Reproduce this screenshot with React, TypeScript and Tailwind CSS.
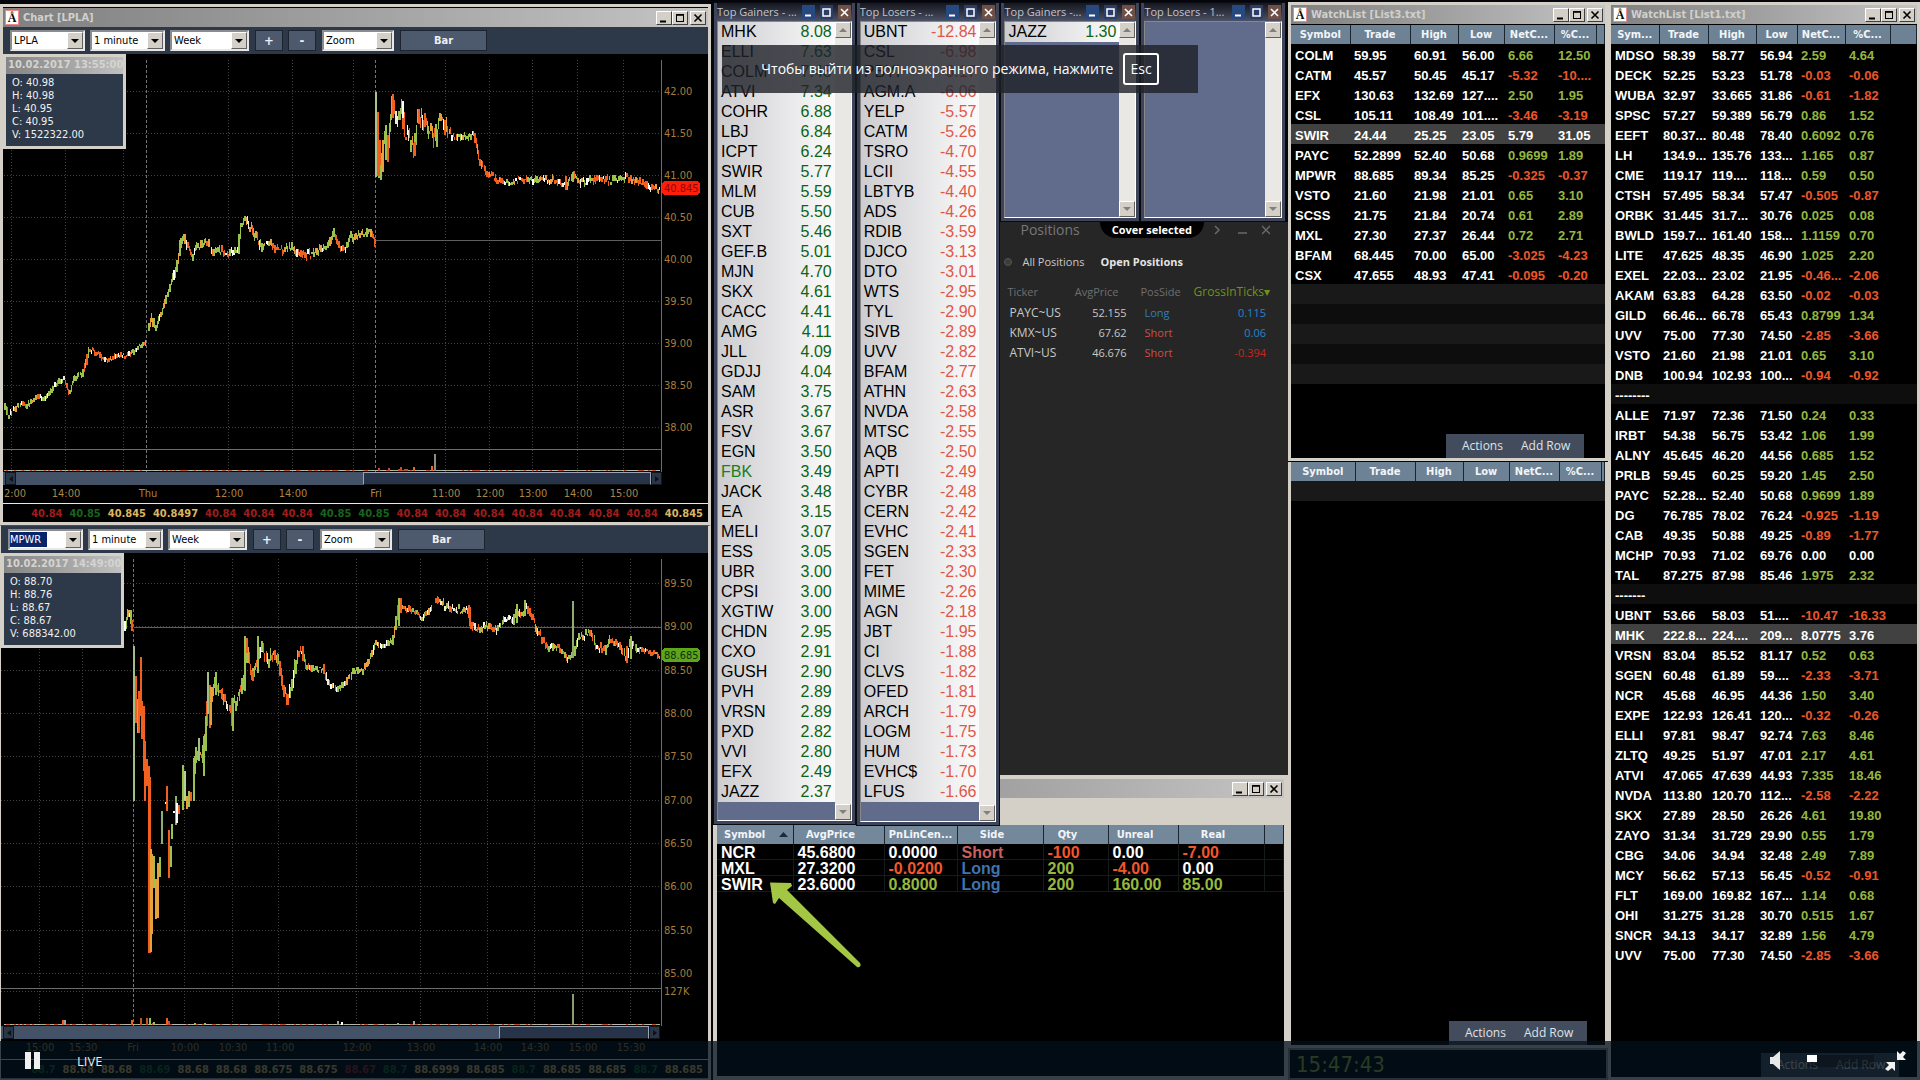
import React from "react";

const UI = "font-['DejaVu_Sans_Condensed','Noto_Sans',sans-serif]";
const SEGOE = "font-['Open_Sans','Noto_Sans',sans-serif]";

/* ---------- classic window chrome ---------- */

function ClassicButton({ label, children }: { label: string; children: React.ReactNode }) {
  return (
    <button
      aria-label={label}
      className="flex h-[14px] w-4 items-center justify-center border border-t-white border-r-[#404040] border-b-[#404040] border-l-white bg-[#d4d0c8]"
    >
      <svg width="12" height="10" viewBox="0 0 12 10" fill="none" stroke="#000" strokeWidth="1.6">
        {children}
      </svg>
    </button>
  );
}

function ClassicControls() {
  return (
    <div className="flex">
      <ClassicButton label="Minimize">
        <path d="M2 8.5h6" strokeWidth="2" />
      </ClassicButton>
      <ClassicButton label="Maximize">
        <path d="M2 1.5h8M2.5 1v8M9.5 1v8M2 8.5h8" strokeWidth="1" />
        <path d="M2 2h8" />
      </ClassicButton>
      <span className="w-0.5" />
      <ClassicButton label="Close">
        <path d="M2.5 1.5l7 7M9.5 1.5l-7 7" />
      </ClassicButton>
    </div>
  );
}

function TitleBar({ title }: { title: string }) {
  return (
    <div className="flex h-[19px] shrink-0 items-center bg-gradient-to-r from-[#808080] to-[#c4c4c4] px-0.5">
      {title && (
        <>
          <span className="flex h-[15px] w-[14px] items-center justify-center border border-[#e88] bg-white font-['Liberation_Serif',serif] text-xs leading-none font-bold text-black">
            Å
          </span>
          <h2 className={`${UI} ml-1 text-[11px] leading-4 font-bold text-[#d0d0cd]`}>{title}</h2>
        </>
      )}
      <span className="flex-1" />
      <ClassicControls />
    </div>
  );
}

/* ---------- charts ---------- */

type Pt = [number, number];
type Bar = [number, number, number, string];

const UP = "#9cc24e";
const DOWN = "#f2601f";
const MIX = "#e8a03a";

function trace(points: Pt[], vol: (x: number) => number, seed: number) {
  let s = seed;
  const rnd = () => {
    s = (s * 1103515245 + 12345) % 2147483648;
    return s / 2147483648;
  };
  const out: Bar[] = [];
  for (let i = 0; i < points.length - 1; i++) {
    const [x0, y0] = points[i];
    const [x1, y1] = points[i + 1];
    const n = Math.max(1, Math.round((x1 - x0) / 1.3));
    for (let k = 0; k < n; k++) {
      const ya = y0 + ((y1 - y0) * k) / n;
      const yb = y0 + ((y1 - y0) * (k + 1)) / n;
      const v = vol(x0);
      const j = (rnd() - 0.5) * v * 0.7;
      const top = Math.min(ya, yb) - rnd() * v * 0.5 + j;
      const bottom = Math.max(ya, yb) + rnd() * v * 0.5 + j + 1;
      const r = rnd();
      let c = y1 < y0 ? (r < 0.65 ? UP : r < 0.8 ? MIX : r < 0.9 ? "#fff" : DOWN) : r < 0.62 ? DOWN : r < 0.75 ? MIX : r < 0.88 ? "#f4ead8" : UP;
      if (Math.abs(y1 - y0) < 5 && r > 0.8) c = "#fff";
      out.push([x0 + ((x1 - x0) * k) / n, top, bottom, c]);
    }
  }
  return out;
}

const lplaA: Pt[] = [[5,403],[9,415],[16,408],[23,402],[27,406],[38,395],[43,399],[49,395],[55,386],[64,378],[70,391],[76,377],[83,374],[87,360],[90,348],[96,352],[109,360],[117,355],[129,355],[138,348],[147,340]];
const lplaB: Pt[] = [[149,327],[153,317],[156,328],[161,317],[166,300],[170,290],[174,278],[177,267],[180,253],[181,242],[185,236],[188,248],[193,254],[198,246],[207,240],[214,252],[222,250],[230,253],[239,249],[242,223],[245,218],[250,225],[256,235],[262,245],[269,241],[275,248],[285,250],[292,246],[301,254],[312,254],[321,248],[330,244],[334,232],[339,245],[347,249],[351,238],[360,234],[371,232],[377,243]];
const lplaC: Pt[] = [[379,170],[382,166],[386,135],[388,152],[393,100],[396,115],[399,117],[403,105],[406,133],[411,135],[415,150],[419,112],[425,123],[431,128],[436,140],[440,121],[445,121],[452,136],[459,137],[475,135],[480,158],[487,173],[493,175],[498,180],[507,183],[516,180],[528,180],[542,178],[555,180],[567,184],[574,176],[582,182],[592,179],[611,180],[627,176],[636,182],[647,185],[661,189]];
const lplaBars: Bar[] = [
  [376, 92, 177, "#a9c48a"],[378, 112, 176, DOWN],[380, 140, 176, DOWN],[381, 165, 180, UP],[383, 140, 172, MIX],[386, 125, 160, UP],[388, 135, 162, DOWN],[393, 94, 118, DOWN],[403, 101, 118, "#fff"],[415, 142, 156, DOWN],[437, 130, 147, UP],[566, 176, 190, DOWN],[573, 172, 182, UP],
];

const mpwrA: Pt[] = [[125,630],[129,612],[131,613],[133,628]];
const mpwrB: Pt[] = [[194,775],[196,752],[203,753],[206,735],[208,700],[212,700],[216,680],[220,690],[225,695],[232,710],[236,700],[242,690],[245,675],[248,650],[253,673],[258,655],[262,648],[269,657],[275,651],[280,663],[284,687],[288,699],[292,687],[296,667],[299,650],[303,650],[307,663],[312,668],[324,667],[328,680],[331,685],[338,688],[347,680],[354,670],[363,668],[372,655],[376,642],[383,644],[393,640],[396,628],[399,607],[404,605],[413,610],[422,616],[433,607]];
const mpwrC: Pt[] = [[436,598],[445,603],[459,609],[469,608],[471,623],[480,629],[489,624],[498,629],[505,618],[514,619],[517,608],[522,615],[528,606],[533,617],[539,630],[549,648],[558,645],[569,656],[575,653],[579,638],[590,630],[597,645],[606,648],[611,639],[620,643],[627,657],[631,640],[638,647],[647,648],[661,655]];
const mpwrBars: Bar[] = [
  [134, 645, 800, "#9fbf86"],[136, 675, 722, DOWN],[138, 698, 732, MIX],[139, 690, 732, DOWN],[141, 656, 715, DOWN],[142, 700, 738, DOWN],[144, 705, 770, DOWN],[145, 740, 800, DOWN],[147, 758, 785, DOWN],[149, 765, 952, DOWN],[150, 776, 952, DOWN],[151, 848, 951, MIX],[152, 853, 933, MIX],[154, 855, 887, UP],[156, 878, 918, MIX],[158, 862, 917, MIX],[160, 856, 876, UP],
  [162, 810, 843, "#8cae74"],[166, 801, 803, "#fff"],[167, 785, 810, DOWN],[169, 829, 877, DOWN],[171, 845, 866, UP],[172, 823, 838, UP],[174, 810, 812, "#fff"],[176, 795, 824, "#8cae74"],[177, 802, 822, "#fff"],[179, 804, 813, DOWN],[183, 764, 809, UP],[185, 770, 800, "#b7cf95"],[187, 795, 808, MIX],[189, 790, 806, UP],[191, 791, 800, DOWN],[194, 757, 800, UP],[196, 746, 762, UP],[199, 737, 760, "#9fbf86"],[204, 735, 775, UP],[206, 715, 750, UP],
  [208, 671, 713, "#9fbf86"],[210, 684, 727, DOWN],[211, 686, 724, MIX],[216, 671, 694, UP],[232, 697, 725, DOWN],[233, 697, 730, UP],[245, 635, 690, UP],[247, 637, 652, DOWN],[258, 635, 672, UP],[253, 670, 680, DOWN],[262, 640, 650, UP],[288, 695, 704, DOWN],[303, 645, 660, DOWN],[399, 597, 625, UP],[401, 597, 612, DOWN],[470, 606, 625, DOWN],[517, 603, 622, UP],[525, 599, 615, UP],[573, 600, 657, "#8cae74"],[627, 645, 662, DOWN],[631, 635, 658, UP],
];

interface ChartSpec {
  id: string;
  left: number;
  top: number;
  height: number;
  prices: [string, number][];
  times: [string, number][];
  dashed: number[];
  verticals: number[];
  close: number;
  closeFrom: number;
  split: number;
  bars: Bar[];
  volume: Bar[];
  tag: [string, number, string, string];
}

function noiseVolume(base: number, hotspots: [number, number, number][], seed: number) {
  let s = seed;
  const rnd = () => {
    s = (s * 1103515245 + 12345) % 2147483648;
    return s / 2147483648;
  };
  const out: Bar[] = [];
  for (let x = 5; x < 661; x += 2) {
    const spot = hotspots.find(([a, b]) => x >= a && x <= b);
    const r = rnd();
    const h = 1 + (spot && r < 0.35 ? rnd() * spot[2] : 0);
    out.push([x, base - h, base, r < 0.35 ? "#c4502a" : r < 0.6 ? "#a9b088" : "#b8b8b8"]);
  }
  return out;
}

const lpla: ChartSpec = {
  id: "LPLA",
  left: 3,
  top: 54,
  height: 418,
  prices: [["42.00", 92],["41.50", 134],["41.00", 176],["40.50", 218],["40.00", 260],["39.50", 302],["39.00", 344],["38.50", 386],["38.00", 428]],
  times: [["2:00", 15],["14:00", 66],["Thu", 148],["12:00", 229],["14:00", 293],["Fri", 376],["11:00", 446],["12:00", 490],["13:00", 533],["14:00", 578],["15:00", 624]],
  dashed: [147, 376],
  verticals: [12, 66, 124, 229, 293, 354, 446, 490, 533, 578, 624],
  close: 240,
  closeFrom: 376,
  split: 449,
  bars: [
    ...trace(lplaA, () => 5, 7),
    ...trace(lplaB, (x) => (x < 181 ? 6 : 8), 11),
    ...trace(lplaC, (x) => (x < 450 ? 15 : 7), 5),
    ...lplaBars,
  ],
  volume: [...noiseVolume(471, [[376, 420, 3]], 3), [435, 454, 471, "#8c8c84"], [432, 466, 471, DOWN], [414, 467, 471, DOWN]],
  tag: ["40.845", 188, "#ff1d0a", "#8c0a00"],
};

const mpwr: ChartSpec = {
  id: "MPWR",
  left: 1,
  top: 552,
  height: 473,
  prices: [["89.50", 583],["89.00", 626],["88.50", 670],["88.00", 713],["87.50", 756],["87.00", 800],["86.50", 843],["86.00", 886],["85.50", 930],["85.00", 973],["127K", 991]],
  times: [["15:00", 40],["15:30", 83],["Fri", 133],["10:00", 185],["10:30", 233],["11:00", 280],["12:00", 357],["13:00", 421],["14:00", 488],["14:30", 535],["15:00", 583],["15:30", 631]],
  dashed: [134],
  verticals: [40, 83, 185, 233, 279, 357, 421, 488, 535, 583, 631],
  close: 626,
  closeFrom: 134,
  split: 987,
  bars: [...trace(mpwrA, () => 6, 2), ...trace(mpwrB, (x) => (x < 300 ? 12 : 6), 19), ...trace(mpwrC, () => 7, 23), ...mpwrBars],
  volume: [...noiseVolume(1024, [[125, 170, 7]], 9), [573, 993, 1024, "#8d9c70"], [63, 1019, 1024, DOWN], [65, 1019, 1024, "#9a9"], [132, 1019, 1024, DOWN], [150, 1017, 1024, UP], [154, 1021, 1024, UP], [167, 1017, 1024, DOWN], [195, 1022, 1024, UP], [205, 1022, 1024, UP], [338, 1020, 1024, "#9a9"], [342, 1021, 1024, "#fff"], [398, 1022, 1024, "#9a9"], [414, 1020, 1024, "#9a9"]],
  tag: ["88.685", 654, "#5ea51c", "#12300a"],
};

const AXIS_FONT = "'DejaVu Sans Condensed','Noto Sans',sans-serif";

function PricePlot({ c }: { c: ChartSpec }) {
  return (
    <svg
      role="img"
      aria-label={`${c.id} price chart`}
      width="709"
      height={c.height}
      viewBox={`${c.left} ${c.top} 709 ${c.height}`}
      className="block shrink-0 bg-black"
      shapeRendering="crispEdges"
    >
      <g stroke="#424242" strokeDasharray="1 2">
        {c.prices.map(([p, y]) => (
          <path key={p} d={`M1 ${y - 0.5}H662`} />
        ))}
        {c.verticals.map((x) => (
          <path key={x} d={`M${x - 0.5} ${c.top + 6}V${c.top + c.height}`} />
        ))}
      </g>
      {c.dashed.map((x) => (
        <path key={x} d={`M${x - 0.5} ${c.top + 6}V${c.top + c.height}`} stroke="#757575" strokeDasharray="3 2" />
      ))}
      <path d={`M${c.closeFrom} ${c.close + 0.5}H662`} stroke="#5e5e5e" />
      <path d={`M1 ${c.split + 0.5}H662`} stroke="#6c6c6c" />
      <path d={`M661.5 ${c.top + 6}V${c.top + c.height}`} stroke="#6c6c6c" />
      {[...c.bars, ...c.volume].map(([x, a, b, col], i) => (
        <path key={i} d={`M${x} ${a}V${b}`} stroke={col} strokeWidth="1.3" />
      ))}
      <g fill="#a87c38" fontSize="11" fontFamily={AXIS_FONT}>
        {c.prices.map(([p, y]) => (
          <text key={p} x="664" y={y + 3}>
            {p}
          </text>
        ))}
      </g>
      <rect x="662" y={c.tag[1] - 7} width="38" height="14" rx="4" fill={c.tag[2]} />
      <text x="664" y={c.tag[1] + 4} fontSize="11" fill={c.tag[3]} fontFamily={AXIS_FONT}>
        {c.tag[0]}
      </text>
    </svg>
  );
}

function Combo({ label, value, width, active }: { label: string; value: string; width: string; active?: boolean }) {
  return (
    <label className={`relative flex h-[21px] items-center border-2 border-[#8c8c8c] border-r-[#e8e8e8] border-b-[#e8e8e8] bg-white ${width}`}>
      {active ? (
        <input
          aria-label={label}
          defaultValue={value}
          className={`${UI} h-[15px] w-[37px] bg-[#0a246a] text-[11px] leading-4 text-white outline-none`}
        />
      ) : (
        <select aria-label={label} className={`${UI} h-full w-full appearance-none bg-white pl-0.5 text-[11px] leading-4 text-black outline-none`}>
          <option>{value}</option>
        </select>
      )}
      <span className="pointer-events-none absolute top-0 right-0 flex h-full w-4 items-center justify-center border border-t-white border-r-[#606060] border-b-[#606060] border-l-white bg-[#d4d0c8]">
        <svg width="8" height="4" viewBox="0 0 8 4">
          <path d="M0 0h8L4 4z" />
        </svg>
      </span>
    </label>
  );
}

const flat = "h-[21px] border border-[#1c2430] bg-[#4d596c] text-center leading-4 font-bold text-[#eceff3]";

function ChartToolbar({ symbol, active }: { symbol: string; active?: boolean }) {
  return (
    <div className="flex h-[27px] shrink-0 items-center bg-[#2d3848] pl-[7px]">
      <Combo label="Symbol" value={symbol} width="w-[75px]" active={active} />
      <span className="w-[5px]" />
      <Combo label="Interval" value="1 minute" width="w-[75px]" />
      <span className="w-[5px]" />
      <Combo label="Range" value="Week" width="w-[79px]" />
      <button className={`${UI} ${flat} ml-1.5 w-7 text-[13px]`}>+</button>
      <button className={`${UI} ${flat} ml-[5px] w-7 text-[13px]`}>-</button>
      <span className="w-1.5" />
      <Combo label="Zoom" value="Zoom" width="w-[72px]" />
      <button className={`${UI} ${flat} ml-1.5 w-[87px] text-[11px]`}>Bar</button>
    </div>
  );
}

function TimeScroll({ thumb }: { thumb: string }) {
  const arrow = "flex w-[11px] items-center justify-center border border-[#0e1520] bg-[#2a3646]";
  return (
    <div className="flex h-[13px] w-[659px] shrink-0 bg-[#445268] pl-0.5">
      <button aria-label="Scroll left" className={arrow}>
        <svg width="4" height="6"><path d="M4 0v6L0 3z" fill="#0c121a" /></svg>
      </button>
      <span className="flex-1" />
      <span className={`border border-[#9aa4b2] border-b-[#111] bg-[#263349] ${thumb}`} />
      <button aria-label="Scroll right" className={arrow}>
        <svg width="4" height="6"><path d="M0 0v6l4-3z" fill="#0c121a" /></svg>
      </button>
    </div>
  );
}

function TimeAxis({ c }: { c: ChartSpec }) {
  return (
    <svg width="709" height="18" viewBox={`${c.left} 0 709 18`} className="block shrink-0 bg-black">
      <g fill="#a98546" fontSize="11" textAnchor="middle" fontFamily={AXIS_FONT}>
        {c.times.map(([t, x]) => (
          <text key={x} x={x} y="12">
            {t}
          </text>
        ))}
      </g>
    </svg>
  );
}

function Tape({ items }: { items: [string, string][] }) {
  const tone: Record<string, string> = { r: "text-[#a01c1c]", g: "text-[#17641f]", y: "text-[#dcb560]" };
  return (
    <div className={`${UI} flex h-[19px] shrink-0 items-center justify-end gap-[7px] overflow-hidden border-t border-[#e8e8e8] bg-black pt-0.5 pr-[5px] text-[11px] leading-4 font-bold`}>
      {items.map(([v, t], i) => (
        <span key={i} className={tone[t]}>
          {v}
        </span>
      ))}
    </div>
  );
}

function QuoteTip({ time, rows }: { time: string; rows: string[] }) {
  return (
    <div className={`${UI} absolute top-0 left-0 h-[95px] w-[123px] border-[3px] border-[#d4d0c8] bg-[#2d3848] text-[11px] text-[#f0f0f0]`}>
      <div className="h-[17px] overflow-hidden bg-gradient-to-r from-[#858585] to-[#c0c0c0] pl-0.5 leading-4 font-bold whitespace-nowrap text-[#d4d4d0]">
        {time}
      </div>
      <div className="pt-0.5 pl-1.5 leading-[13px]">
        {rows.map((r) => (
          <div key={r}>{r}</div>
        ))}
      </div>
    </div>
  );
}

const tape1: [string, string][] = [["40.84","r"],["40.85","g"],["40.845","y"],["40.8497","y"],["40.84","r"],["40.84","r"],["40.84","r"],["40.85","g"],["40.85","g"],["40.84","r"],["40.84","r"],["40.84","r"],["40.84","r"],["40.84","r"],["40.84","r"],["40.84","r"],["40.845","y"]];
const tape2: [string, string][] = [["88.7","g"],["88.68","y"],["88.68","y"],["88.69","g"],["88.68","y"],["88.68","y"],["88.675","y"],["88.675","y"],["88.67","r"],["88.7","g"],["88.6999","y"],["88.685","y"],["88.7","g"],["88.685","y"],["88.685","y"],["88.7","g"],["88.685","y"]];

/* ---------- gainers / losers ---------- */

const gainers = "MHK 8.08,ELLI 7.63,COLM 7.48,ATVI 7.34,COHR 6.88,LBJ 6.84,ICPT 6.24,SWIR 5.77,MLM 5.59,CUB 5.50,SXT 5.46,GEF.B 5.01,MJN 4.70,SKX 4.61,CACC 4.41,AMG 4.11,JLL 4.09,GDJJ 4.04,SAM 3.75,ASR 3.67,FSV 3.67,EGN 3.50,FBK 3.49,JACK 3.48,EA 3.15,MELI 3.07,ESS 3.05,UBR 3.00,CPSI 3.00,XGTIW 3.00,CHDN 2.95,CXO 2.91,GUSH 2.90,PVH 2.89,VRSN 2.89,PXD 2.82,VVI 2.80,EFX 2.49,JAZZ 2.37";
const losers = "UBNT -12.84,CSL -6.98,PBYI -6.17,AGM.A -6.06,YELP -5.57,CATM -5.26,TSRO -4.70,LCII -4.55,LBTYB -4.40,ADS -4.26,RDIB -3.59,DJCO -3.13,DTO -3.01,WTS -2.95,TYL -2.90,SIVB -2.89,UVV -2.82,BFAM -2.77,ATHN -2.63,NVDA -2.58,MTSC -2.55,AQB -2.50,APTI -2.49,CYBR -2.48,CERN -2.42,EVHC -2.41,SGEN -2.33,FET -2.30,MIME -2.26,AGN -2.18,JBT -1.95,CI -1.88,CLVS -1.82,OFED -1.81,ARCH -1.79,LOGM -1.75,HUM -1.73,EVHC$ -1.70,LFUS -1.66";

function ScrollButton({ down }: { down?: boolean }) {
  return (
    <button
      aria-label={down ? "Scroll down" : "Scroll up"}
      className="flex h-4 w-4 items-center justify-center border border-t-white border-r-[#606060] border-b-[#606060] border-l-white bg-[#d4d0c8]"
    >
      <svg width="8" height="4" viewBox="0 0 8 4">
        <path d={down ? "M0 0h8L4 4z" : "M0 4h8L4 0z"} fill="#808080" />
      </svg>
    </button>
  );
}

function MoverWindow({ title, data, height }: { title: string; data: string; height: string }) {
  const rows = data ? data.split(",").map((r) => r.split(" ")) : [];
  const mini = "flex h-[14px] w-[13px] items-center justify-center";
  return (
    <section className={`relative z-10 flex flex-col border border-[#0a0a12] bg-[#3e4558] px-[3px] pb-[3px] ${height}`}>
      <header className="flex h-[18px] shrink-0 items-center gap-[5px] bg-gradient-to-b from-[#15171f] to-[#4c5266] pr-px">
        <h2 className="flex-1 overflow-hidden font-['Open_Sans','Noto_Sans',sans-serif] text-[11px] leading-4 whitespace-nowrap text-[#c2c4c9]">{title}</h2>
        <button aria-label="Minimize" className={`${mini} bg-[#28497f]`}>
          <svg width="9" height="9"><path d="M1 7.5h6" stroke="#fff" strokeWidth="2" /></svg>
        </button>
        <button aria-label="Maximize" className={`${mini} bg-[#2c3e66]`}>
          <svg width="9" height="9"><rect x="1" y="1" width="7" height="7" fill="none" stroke="#fff" strokeWidth="1.5" /></svg>
        </button>
        <button aria-label="Close" className={`${mini} bg-[#6f5048]`}>
          <svg width="9" height="9"><path d="M1 1l7 7M8 1L1 8" stroke="#fff" strokeWidth="1.6" /></svg>
        </button>
      </header>
      <div className="flex min-h-0 flex-1 border border-t-[#888] border-r-white border-b-white border-l-[#888] bg-[#616b8b]">
        <div className="min-w-0 flex-1">
          <table className="w-full border-collapse bg-gradient-to-r from-[#cdcdd0] via-[#e4e4e6] to-[#fbfbfb] font-['Liberation_Sans',Arial,sans-serif] text-base leading-5">
            <tbody>
              {rows.map(([s, v], i) => (
                <tr key={i} className="h-5">
                  <td className={`p-0 pl-[3px] ${s === "FBK" ? "text-[#15801f]" : "text-black"}`}>{s}</td>
                  <td className={`p-0 pr-[3px] text-right ${v[0] === "-" ? "text-[#e0574a]" : "text-[#0c6416]"}`}>{v}</td>
                </tr>
              ))}
            </tbody>
          </table>
        </div>
        <div className="flex w-4 flex-col justify-between bg-[#e9e8e5]">
          <ScrollButton />
          <ScrollButton down />
        </div>
      </div>
    </section>
  );
}

/* ---------- positions ---------- */

function Positions() {
  const rows = [["PAYC~US", "52.155", "Long", "0.115"], ["KMX~US", "67.62", "Short", "0.06"], ["ATVI~US", "46.676", "Short", "-0.394"]];
  return (
    <section className={`${SEGOE} flex min-h-0 flex-1 flex-col bg-[#262626] pr-[18px] pl-[7px] text-[#c8c8c8]`}>
      <header className="flex h-4 items-center text-[#777]">
        <h2 className="ml-[13px] text-sm leading-4">Positions</h2>
        <button className="ml-5 h-4 rounded-b-full bg-black px-3 text-[11px] leading-4 font-bold text-white">Cover selected</button>
        <span className="flex-1" />
        <button aria-label="Expand" className="w-6"><svg width="8" height="10" fill="none" stroke="#6a6a6a" strokeWidth="1.5"><path d="M1 1l4 4-4 4" /></svg></button>
        <button aria-label="Minimize" className="w-6"><svg width="9" height="10"><path d="M0 8h9" stroke="#6a6a6a" strokeWidth="1.5" /></svg></button>
        <button aria-label="Close" className="w-2"><svg width="8" height="10"><path d="M0 1l8 8M8 1L0 9" stroke="#6a6a6a" strokeWidth="1.5" /></svg></button>
      </header>
      <nav className="mt-[14px] flex h-5 items-center gap-4 text-[11px] leading-5">
        <span className="-mr-[6px] -ml-[3px] h-2 w-2 shrink-0 rounded-full border border-[#555] bg-[#3c3c3c]" />
        <button>All Positions</button>
        <button className="font-bold text-[#e4e4e4]">Open Positions</button>
      </nav>
      <table className="mt-2 table-fixed border-collapse text-[11px] leading-5">
        <colgroup>
          <col className="w-[60px]" />
          <col className="w-[59px]" />
          <col className="w-[62px]" />
          <col />
        </colgroup>
        <thead className="text-[#6e6e6e]">
          <tr className="h-[23px]">
            <th className="p-0 text-left font-normal">Ticker</th>
            <th className="p-0 pr-2 text-right font-normal">AvgPrice</th>
            <th className="p-0 pl-[14px] text-left font-normal">PosSide</th>
            <th className="p-0 text-right text-xs leading-5 font-normal whitespace-nowrap text-[#71911c]">GrossInTicks▾</th>
          </tr>
        </thead>
        <tbody>
          {rows.map(([t, p, s, g]) => (
            <tr key={t} className="h-5">
              <td className="p-0 pl-0.5 text-xs leading-5 whitespace-nowrap">{t}</td>
              <td className="p-0 text-right">{p}</td>
              <td className={`p-0 pl-[18px] ${s === "Long" ? "text-[#2f7fb8]" : "text-[#c8504a]"}`}>{s}</td>
              <td className={`p-0 pr-1 text-right ${g[0] === "-" ? "text-[#c4261f]" : "text-[#1f86cf]"}`}>{g}</td>
            </tr>
          ))}
        </tbody>
      </table>
    </section>
  );
}

/* ---------- account grid ---------- */

const head = "h-[19px] overflow-hidden border-r border-[#1b2530] p-0 text-center text-[11px] leading-4 font-bold whitespace-nowrap text-[#f2f5f8]";

function AccountGrid() {
  const rows = [
    ["NCR", "45.6800", "0.0000", "Short", "-100", "0.00", "-7.00"],
    ["MXL", "27.3200", "-0.0200", "Long", "200", "-4.00", "0.00"],
    ["SWIR", "23.6000", "0.8000", "Long", "200", "160.00", "85.00"],
  ];
  const tone = (v: string, i: number) => {
    if (i < 2) return "text-white";
    if (v === "Short") return "text-[#c8605c]";
    if (v === "Long") return "text-[#3f74ad]";
    if (v[0] === "-") return "text-[#f2572b]";
    return /^0\.0+$/.test(v) ? "text-white" : "text-[#96b93c]";
  };
  return (
    <table className="w-full table-fixed border-collapse">
      <colgroup>
        <col className="w-[76px]" />
        <col className="w-[91px]" />
        <col className="w-[73px]" />
        <col className="w-[86px]" />
        <col className="w-[65px]" />
        <col className="w-[70px]" />
        <col className="w-[86px]" />
        <col />
      </colgroup>
      <thead className={`${UI} bg-[#74889b]`}>
        <tr>
          <th className={head}>
            <span className="flex items-center justify-between pr-[5px] pl-[7px]">
              Symbol
              <svg width="9" height="5"><path d="M0 5h9L4.500 0z" fill="#1b2a40" /></svg>
            </span>
          </th>
          {["AvgPrice", "PnLinCen...", "Side", "Qty", "Unreal", "Real", ""].map((h) => (
            <th key={h} className={`${head} ${h === "PnLinCen..." ? "" : "pr-4"}`}>{h}</th>
          ))}
        </tr>
      </thead>
      <tbody className="font-['Liberation_Sans',Arial,sans-serif] text-base leading-[17px] font-bold">
        {rows.map((r) => (
          <tr key={r[0]}>
            {[...r, ""].map((v, i) => (
              <td key={i} className={`border-r border-b border-[#151a1a] p-0 pl-1 ${tone(v, i)}`}>
                <span className="block h-[15px] whitespace-nowrap">{v}</span>
              </td>
            ))}
          </tr>
        ))}
      </tbody>
    </table>
  );
}

/* ---------- watch lists ---------- */

const list3 = `COLM 59.95 60.91 56.00 6.66 12.50
CATM 45.57 50.45 45.17 -5.32 -10....
EFX 130.63 132.69 127.... 2.50 1.95
CSL 105.11 108.49 101.... -3.46 -3.19
SWIR 24.44 25.25 23.05 5.79 31.05
PAYC 52.2899 52.40 50.68 0.9699 1.89
MPWR 88.685 89.34 85.25 -0.325 -0.37
VSTO 21.60 21.98 21.01 0.65 3.10
SCSS 21.75 21.84 20.74 0.61 2.89
MXL 27.30 27.37 26.44 0.72 2.71
BFAM 68.445 70.00 65.00 -3.025 -4.23
CSX 47.655 48.93 47.41 -0.095 -0.20`;

const list1 = `MDSO 58.39 58.77 56.94 2.59 4.64
DECK 52.25 53.23 51.78 -0.03 -0.06
WUBA 32.97 33.665 31.86 -0.61 -1.82
SPSC 57.27 59.389 56.79 0.86 1.52
EEFT 80.37... 80.48 78.40 0.6092 0.76
LH 134.9... 135.76 133... 1.165 0.87
CME 119.17 119.... 118... 0.59 0.50
CTSH 57.495 58.34 57.47 -0.505 -0.87
ORBK 31.445 31.7... 30.76 0.025 0.08
BWLD 159.7... 161.40 158... 1.1159 0.70
LITE 47.625 48.35 46.90 1.025 2.20
EXEL 22.03... 23.02 21.95 -0.46... -2.06
AKAM 63.83 64.28 63.50 -0.02 -0.03
GILD 66.46... 66.78 65.43 0.8799 1.34
UVV 75.00 77.30 74.50 -2.85 -3.66
VSTO 21.60 21.98 21.01 0.65 3.10
DNB 100.94 102.93 100... -0.94 -0.92
--------
ALLE 71.97 72.36 71.50 0.24 0.33
IRBT 54.38 56.75 53.42 1.06 1.99
ALNY 45.645 46.20 44.56 0.685 1.52
PRLB 59.45 60.25 59.20 1.45 2.50
PAYC 52.28... 52.40 50.68 0.9699 1.89
DG 76.785 78.02 76.24 -0.925 -1.19
CAB 49.35 50.88 49.25 -0.89 -1.77
MCHP 70.93 71.02 69.76 0.00 0.00
TAL 87.275 87.98 85.46 1.975 2.32
-------
UBNT 53.66 58.03 51.... -10.47 -16.33
MHK 222.8... 224.... 209... 8.0775 3.76
VRSN 83.04 85.52 81.17 0.52 0.63
SGEN 60.48 61.89 59.... -2.33 -3.71
NCR 45.68 46.95 44.36 1.50 3.40
EXPE 122.93 126.41 120... -0.32 -0.26
ELLI 97.81 98.47 92.74 7.63 8.46
ZLTQ 49.25 51.97 47.01 2.17 4.61
ATVI 47.065 47.639 44.93 7.335 18.46
NVDA 113.80 120.70 112... -2.58 -2.22
SKX 27.89 28.50 26.26 4.61 19.80
ZAYO 31.34 31.729 29.90 0.55 1.79
CBG 34.06 34.94 32.48 2.49 7.89
MCY 56.62 57.13 56.45 -0.52 -0.91
FLT 169.00 169.82 167... 1.14 0.68
OHI 31.275 31.28 30.70 0.515 1.67
SNCR 34.13 34.17 32.89 1.56 4.79
UVV 75.00 77.30 74.50 -2.85 -3.66`;

function WatchTable({ data, selected, symbol, cols, empty = [] }: { data: string; selected?: string; symbol: string; cols: string[]; empty?: string[] }) {
  const rows = data ? data.split("\n").map((r) => r.split(" ")) : [];
  return (
    <table className="w-full table-fixed border-collapse bg-black">
      <colgroup>
        {cols.map((c, i) => (
          <col key={i} className={c} />
        ))}
        <col />
      </colgroup>
      <thead className={`${UI} bg-[#6e8295]`}>
        <tr>
          {[symbol, "Trade", "High", "Low", "NetC...", "%C...", ""].map((h) => (
            <th key={h} className={head}>{h}</th>
          ))}
        </tr>
      </thead>
      <tbody className="font-['Liberation_Sans',Arial,sans-serif] text-[13px] font-bold">
        {rows.map((r, n) => {
          const sel = r[0] === selected;
          const bg = sel ? "bg-[#414141]" : r.length === 1 ? "bg-[#0e0e0e]" : "bg-black";
          return (
            <tr key={n} className={`h-5 ${bg}`}>
              {Array.from({ length: 7 }, (_, i) => {
                const v = r[i] ?? "";
                const tone = i < 4 || sel || v === "0.00" ? "text-white" : v[0] === "-" ? "text-[#ee5629]" : "text-[#93b640]";
                return (
                  <td key={i} className={`p-0 pl-1 ${tone}`}>
                    <span className="block h-5 leading-[23px] whitespace-nowrap">{v}</span>
                  </td>
                );
              })}
            </tr>
          );
        })}
        {empty.map((bg, i) => (
          <tr key={`e${i}`} className={`h-5 ${bg}`}>
            <td colSpan={7} />
          </tr>
        ))}
      </tbody>
    </table>
  );
}

function ListActions({ place }: { place: string }) {
  return (
    <div className={`${SEGOE} flex h-6 w-[138px] items-center gap-[18px] self-end bg-[#434c5d] pl-4 text-xs leading-5 text-[#dfe3e8] ${place}`}>
      <button>Actions</button>
      <button>Add Row</button>
    </div>
  );
}

const cols3 = ["w-[59px]", "w-[60px]", "w-[48px]", "w-[46px]", "w-[50px]", "w-[42px]"];
const cols1 = ["w-[48px]", "w-[49px]", "w-[48px]", "w-[41px]", "w-[48px]", "w-[45px]"];
const frame = "border-[3px] border-[#d4d0c8]";

export default function App() {
  return (
    <main className="relative grid h-screen grid-cols-[713fr_575fr_320fr_312fr] overflow-hidden bg-[#05060c]">
      {/* charts */}
      <div className="flex min-w-0 flex-col pt-1 pr-0.5">
        <section className={`${frame} flex flex-col overflow-hidden pt-px`}>
          <TitleBar title="Chart [LPLA]" />
          <ChartToolbar symbol="LPLA" />
          <div className="relative">
            <PricePlot c={lpla} />
            <QuoteTip time="10.02.2017 13:55:00" rows={["O: 40.98", "H: 40.98", "L: 40.95", "C: 40.95", "V: 1522322.00"]} />
          </div>
          <div className="bg-black">
            <TimeScroll thumb="w-[288px]" />
            <TimeAxis c={lpla} />
          </div>
          <Tape items={tape1} />
        </section>
        <section className="flex min-h-0 flex-1 flex-col overflow-hidden border border-r-[3px] border-[#d4d0c8] border-t-[#4a4d52]">
          <ChartToolbar symbol="MPWR" active />
          <div className="relative">
            <PricePlot c={mpwr} />
            <QuoteTip time="10.02.2017 14:49:00" rows={["O: 88.70", "H: 88.76", "L: 88.67", "C: 88.67", "V: 688342.00"]} />
          </div>
          <div className="bg-black pb-0.5">
            <TimeScroll thumb="w-[150px]" />
            <TimeAxis c={mpwr} />
          </div>
          <Tape items={tape2} />
          <div className="flex-1 bg-[#8f9298]" />
        </section>
      </div>

      {/* movers, positions and account */}
      <div className="flex min-w-0 flex-col">
        <div className="grid h-[775px] grid-cols-[142fr_145fr_288fr] items-start pt-0.5">
          <MoverWindow title="Top Gainers - ..." data={gainers} height="h-[823px]" />
          <MoverWindow title="Top Losers - ..." data={losers} height="h-[824px]" />
          <div className="flex h-[773px] flex-col">
            <div className="grid shrink-0 grid-cols-[138fr_148fr] pr-0.5">
              <MoverWindow title="Top Gainers -..." data="JAZZ 1.30" height="h-[220px]" />
              <MoverWindow title="Top Losers - 1..." data="" height="h-[220px]" />
            </div>
            <Positions />
          </div>
        </div>
        <section className="flex min-h-0 flex-1 flex-col border-4 border-[#d4d0c8]">
          <TitleBar title="" />
          <div className="h-[27px] shrink-0 bg-[#d4d0c8]" />
          <div className="relative flex-1 bg-black">
            <AccountGrid />
            <svg className="absolute top-[56px] left-[50px]" width="96" height="88" viewBox="767 881 96 88" aria-hidden="true">
              <path d="M770 882.500L791 883l1 3-5 4 73 73c2 3-1 5-3 4l-78-69-4 6-2-1z" fill="#a3c644" />
            </svg>
          </div>
        </section>
      </div>

      {/* first and second watch list */}
      <div className="flex min-w-0 flex-col pt-0.5">
        <section className={`${frame} flex h-[459px] flex-col bg-black`}>
          <TitleBar title="WatchList [List3.txt]" />
          <div className="mt-px">
            <WatchTable
              data={list3}
              selected="SWIR"
              symbol="Symbol"
              cols={cols3}
              empty={["bg-[#191919]", "bg-[#0d0d0d]", "bg-[#191919]", "bg-[#0d0d0d]", "bg-[#191919]"]}
            />
          </div>
          <div className="flex-1" />
          <ListActions place="mr-[21px]" />
        </section>
        <section className="mt-px flex min-h-0 flex-1 flex-col border-x-[3px] border-b-[3px] border-[#d4d0c8] bg-black">
          <WatchTable data="" symbol="Symbol" cols={["w-[64px]", "w-[60px]", "w-[48px]", "w-[46px]", "w-[50px]", "w-[42px]"]} empty={["bg-[#191919]"]} />
          <div className="flex-1" />
          <ListActions place="mr-[18px]" />
        </section>
        <section className={`${UI} h-8 shrink-0 border-2 border-[#8a8f96] bg-black pl-1.5 text-[22px] leading-[30px] text-[#9bb840]`}>15:47:43</section>
      </div>

      {/* third watch list */}
      <div className="flex min-w-0 flex-col pt-0.5">
        <section className={`${frame} flex min-h-0 flex-1 flex-col bg-black`}>
          <TitleBar title="WatchList [List1.txt]" />
          <div className="mt-px">
            <WatchTable data={list1} selected="MHK" symbol="Sym..." cols={cols1} />
          </div>
          <div className="flex-1" />
          <ListActions place="mr-[18px]" />
        </section>
      </div>

      {/* full-screen hint */}
      <div className={`${SEGOE} absolute top-[45px] left-1/2 z-20 flex h-12 w-[476px] -translate-x-1/2 items-center justify-center gap-2.5 bg-[#1e2028]/80 text-sm leading-5 text-white`}>
        <span className="whitespace-nowrap">Чтобы выйти из полноэкранного режима, нажмите</span>
        <kbd className="flex h-8 items-center rounded-[3px] border-2 border-white px-[5px] font-[inherit]">Esc</kbd>
      </div>

      {/* player bar */}
      <div className="absolute inset-x-0 bottom-0 z-20 flex h-[39px] items-center bg-[#03101b]/75 pr-[13px] pl-[25px] text-[#e8eaec]">
        <button aria-label="Pause">
          <svg width="16" height="17" fill="#f0f0f0"><path d="M0 0h6v17H0zM9 0h6v17H9z" /></svg>
        </button>
        <span className={`${SEGOE} ml-9 text-[13px] leading-5`}>LIVE</span>
        <span className="flex-1" />
        <button aria-label="Mute">
          <svg width="12" height="20" fill="#e8e8e8"><path d="M0 6h3l7-6v19l-7-6H0z" /></svg>
        </button>
        <span className="ml-[25px] flex h-3 w-[67px] items-start bg-black/30">
          <span className="h-[7px] w-[10px] bg-white" />
        </span>
        <button aria-label="Exit full screen" className="ml-[11px]">
          <svg width="22" height="22" fill="#f2f2f2">
            <path d="M12 1v9h9l-3-3 3-4-3-2-3 3zM10 21v-9H1l3 3-4 4 3 2 4-3z" />
          </svg>
        </button>
      </div>
    </main>
  );
}
